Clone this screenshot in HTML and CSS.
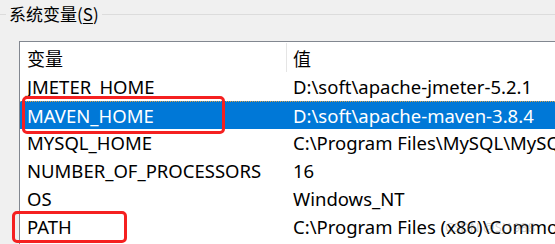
FILE: index.html
```html
<!DOCTYPE html>
<html lang="zh">
<head>
  <meta charset="UTF-8">
  <title>系统变量</title>
  <link rel="stylesheet" href="styles.css">
</head>
<body>

  <div class="legend">
    <div class="legend-line short"></div>
    <span class="legend-text">系统变量(<u>S</u>)</span>
    <div class="legend-line"></div>
  </div>

  <div class="list">
    <div class="row head">
      <div class="c1">变量</div>
      <div class="c2">值</div>
    </div>
    <div class="row">
      <div class="c1">JMETER_HOME</div>
      <div class="c2">D:\soft\apache-jmeter-5.2.1</div>
    </div>
    <div class="row selected">
      <div class="c1">MAVEN_HOME</div>
      <div class="c2">D:\soft\apache-maven-3.8.4</div>
      <div class="mark mark-maven"></div>
    </div>
    <div class="row">
      <div class="c1">MYSQL_HOME</div>
      <div class="c2">C:\Program Files\MySQL\MySQL Server 8.0\bin</div>
    </div>
    <div class="row">
      <div class="c1">NUMBER_OF_PROCESSORS</div>
      <div class="c2">16</div>
    </div>
    <div class="row">
      <div class="c1">OS</div>
      <div class="c2">Windows_NT</div>
    </div>
    <div class="row">
      <div class="c1">PATH</div>
      <div class="c2">C:\Program Files (x86)\Common Files\Oracle\Java\javapath</div>
      <div class="mark mark-path"></div>
      <span class="watermark">CSDN @SJ1988</span>
    </div>
  </div>

</body>
</html>
```

FILE: styles.css
```css
body {
  margin: 0;
  background-color: #f0f0f0;
  font-family: "Noto Sans", "Noto Sans CJK SC", sans-serif;
  color: #000;
  overflow: hidden;
  width: 555px;
  height: 244px;
}

.legend {
  display: flex;
  align-items: center;
  height: 28px;
}

.legend-line {
  flex: 1;
  height: 1px;
  background-color: #dcdcdc;
}

.legend-line.short {
  flex: none;
  width: 6px;
}

.legend-text {
  font-family: "Noto Sans CJK SC", sans-serif;
  font-size: 17px;
  padding: 0 3px;
  line-height: 28px;
}

.legend-text u {
  text-underline-offset: 2px;
}

.list {
  margin-top: 13px;
  margin-left: 19px;
  width: 535px;
  height: 202px;
  background-color: #fff;
  border-top: 1px solid #828790;
  border-left: 1px solid #828790;
}

.row {
  position: relative;
  display: flex;
  height: 28px;
  line-height: 28px;
  font-size: 18.5px;
  white-space: nowrap;
}

.row.head {
  height: 31px;
  line-height: 32px;
}

.c1 {
  flex: none;
  width: 259px;
  padding-left: 7px;
  overflow: hidden;
}

.c2 {
  flex: 1;
  min-width: 0;
  padding-left: 7px;
  overflow: hidden;
}

.head .c1,
.head .c2 {
  font-family: "Noto Sans CJK SC", sans-serif;
  font-size: 18px;
}

.head .c2 {
  border-left: 1px solid #e5e5e5;
  padding-left: 6px;
  height: 29px;
  margin-top: 1px;
  line-height: 30px;
}

.selected {
  background-color: #0078d7;
  color: #fff;
  height: 27px;
  border-top: 1px dotted #d9a04a;
}

.mark {
  position: absolute;
  border: 3px solid #f52020;
  border-radius: 5px;
}

.mark-maven {
  left: 2px;
  top: -6px;
  width: 197px;
  height: 32px;
}

.mark-path {
  left: -8px;
  top: -2px;
  width: 109px;
  height: 26px;
}

.watermark {
  position: absolute;
  left: 425px;
  top: 0;
  font-size: 13px;
  color: rgba(120, 120, 120, 0.35);
}
```
